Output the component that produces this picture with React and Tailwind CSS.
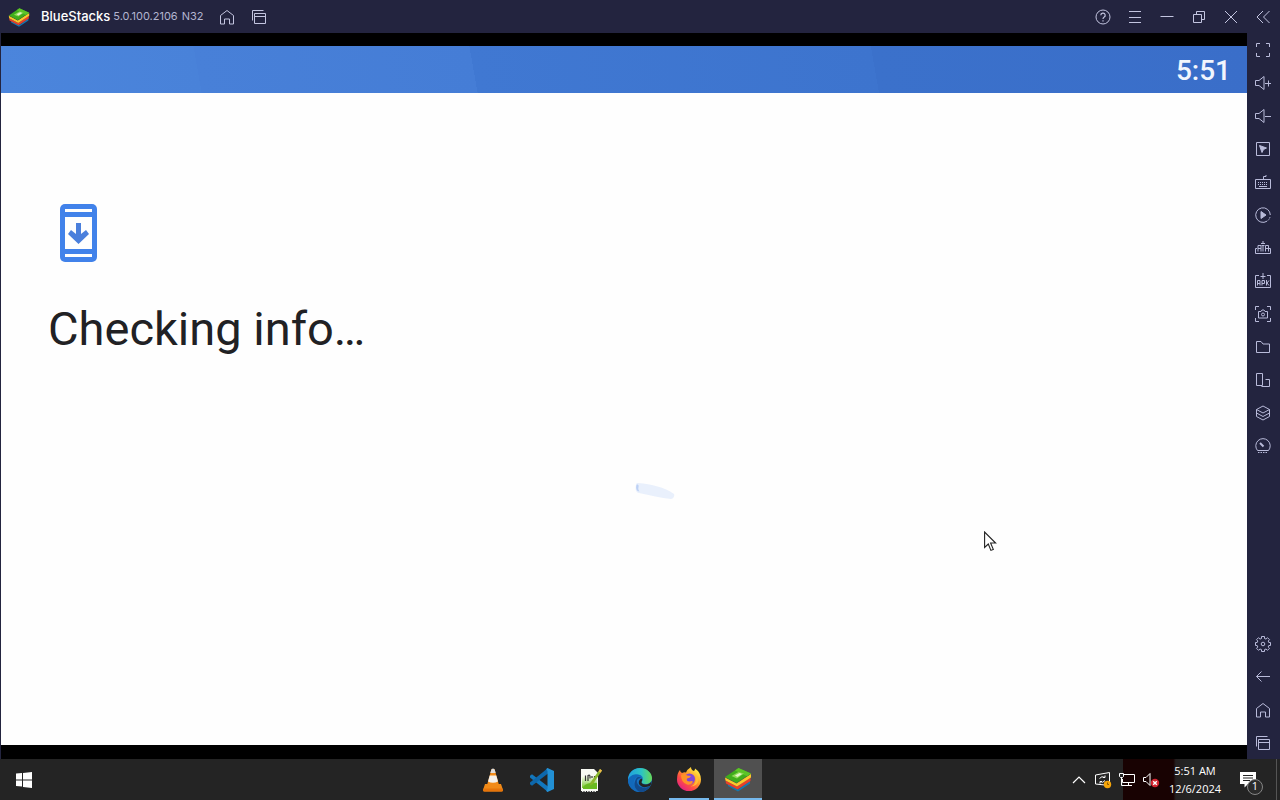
import { useId } from 'react';

const LineIcon = ({ children, size = 18 }) => (
    <svg width={size} height={size} viewBox="0 0 18 18" fill="none" stroke="currentColor" strokeWidth="1" aria-hidden="true">
        {children}
    </svg>
);

const HomeIcon = () => (
    <LineIcon>
        <path d="M2.500 7.500 9 2.500l6.500 5v8.500h-4v-5h-5v5h-4z" />
    </LineIcon>
);

const WindowsIcon = () => (
    <LineIcon>
        <path d="M4.500 5.500h11v10h-11zM4.500 8.500h11M2.500 12.500v-10h11" />
    </LineIcon>
);

const BlueStacksLogo = ({ size }) => (
    <svg width={size} height={size} viewBox="0 0 28 28" aria-hidden="true">
        <path d="M4 19 14 24.500 26 16v2.500L14 26.500 4 21z" fill="#1478b0" />
        <path d="M1.500 15.500 13 21.500 26.500 12.500V16L13.500 24.500 2 18.500z" fill="#e8402a" />
        <path d="M1 12.500 12.500 18.500 27 9v3.500L13 21.500 1.500 15.500z" fill="#fbc82c" />
        <path d="M1 12 14.500 3 27 8.500 12.500 18z" fill="#3fae1c" />
        <path d="M14.500 3 27 8.500l-4 2.800L11 5.400z" fill="#5cc427" />
        <path d="M7.500 11 14.500 7l5.500 1.500-7 5z" fill="#8fd957" />
        <path d="m11 10.500 4.500-2.500 2.500 1-4.500 3z" fill="#e3f4c9" />
    </svg>
);

const sideTools = [
    { label: 'Full screen', icon: <path d="M2.500 6V2.500H6M12 2.500h3.500V6M15.500 12v3.500H12M6 15.500H2.500V12" /> },
    { label: 'Increase volume', icon: <path d="M1.500 6.500h3.500l5-4v13l-5-4H1.500zM11 9.500h6M14.500 6.500v6" /> },
    { label: 'Decrease volume', icon: <path d="M1.500 6.500h3.500l5-4v13l-5-4H1.500zM11 9.500h6" /> },
    {
        label: 'Lock cursor',
        icon: (
            <>
                <path d="M2.500 2.500h13v13h-13z" />
                <path d="M5.500 5.500l7 2.500-3 1.500-1.500 3z" fill="currentColor" />
            </>
        ),
    },
    {
        label: 'Game controls',
        icon: (
            <>
                <path d="M1.500 6.500h15v9h-15zM9.500 6V3.500H12V2" />
                <path d="M4 9.500h10M4 11.500h10" strokeDasharray="1 1" />
                <path d="M5 13.500h8" />
            </>
        ),
    },
    {
        label: 'Macro recorder',
        icon: (
            <>
                <path d="M13 15.200A7.300 7.300 0 1 1 16.300 9" />
                <path d="M16 11a7 7 0 0 1-3 4.200" strokeDasharray="1.500 1" />
                <path d="M7 5.500 12 9l-5 3.500z" fill="currentColor" />
            </>
        ),
    },
    { label: 'Multi-instance manager', icon: <path d="M3 9.500H1.500v5h15v-5H15M4 12.500V6.500h3v6M9 2v3M7 4.500h4M7.500 6.500h3M9 6.500v6M11.500 12.500V6.500h3v6M4 9.500h3M11.500 9.500h3" /> },
    { label: 'Install APK', icon: <path d="M5 3.500H1.500v12h15v-12H13M9 1v6M6.500 4.500h5M3.500 13.500v-5H6v5M3.500 11.500H6M8 13.500v-5h2.500v3H8M12.500 8v5.500M15 8.500l-2 2.500 2 2.500" /> },
    {
        label: 'Screenshot',
        icon: (
            <>
                <path d="M1.500 5V1.500H5M13 1.500h3.500V5M16.500 13v3.500H13M5 16.500H1.500V13" />
                <path d="M4.500 6.500H7l1-1.500h2l1 1.500h2.500v6.500h-9z" />
                <circle cx="9" cy="9.500" r="1.500" />
            </>
        ),
    },
    { label: 'Media folder', icon: <path d="M2.500 14.500v-11H7l2 2.500h6.500v8.500z" /> },
    { label: 'Rotate', icon: <path d="M2.500 2.500h6v12h-6zM11.500 8.500h4v7h-8" /> },
    { label: 'Eco mode', icon: <path d="m9 2 6.500 3.500L9 9 2.500 5.500zM2.500 5.500V9L9 12.500 15.500 9V5.500M2.500 9v3.500L9 16l6.500-3.500V9" /> },
    {
        label: 'Performance',
        icon: (
            <>
                <path d="M3.500 13.500a7.200 7.200 0 1 1 11 0z" />
                <path d="m6 6 3.500 3.500" strokeWidth="2" />
                <path d="M4 15.500h10" strokeDasharray="1.500 1" />
            </>
        ),
    },
];

const navTools = [
    {
        label: 'Settings',
        icon: (
            <LineIcon>
                <path d="M7.500 1.500h3v2l1.500.6L13.500 2.700l2 2L14.200 6l.6 1.500h1.700v3h-1.700l-.6 1.500 1.300 1.300-2 2-1.500-1.300-1.500.6v1.900h-3v-1.900L6 14l-1.500 1.300-2-2L3.800 12l-.6-1.500H1.500v-3h1.700L3.800 6 2.500 4.700l2-2L6 4.100l1.500-.6z" />
                <circle cx="9" cy="9" r="1.800" />
            </LineIcon>
        ),
    },
    { label: 'Back', icon: <LineIcon><path d="M16 8.500H2.500M7.500 3.500l-5 5 5 5" /></LineIcon> },
    { label: 'Home', icon: <HomeIcon /> },
    { label: 'Recent apps', icon: <WindowsIcon /> },
];

const SideButton = ({ label, children }) => (
    <button type="button" aria-label={label} className="flex h-[33px] w-full shrink-0 items-center justify-center">
        {children}
    </button>
);

const TitleBar = () => (
    <header className="flex h-[33px] shrink-0 items-center bg-[#23243f] text-[#c3c5e0]">
        <div className="flex items-center pl-2">
            <BlueStacksLogo size={22} />
            <h1 className="ml-[11px] font-[Inter,sans-serif] text-[13px] font-medium text-white">BlueStacks</h1>
            <span className="ml-[3px] font-[Inter,sans-serif] text-[11px] text-[#b3b5d0]">5.0.100.2106</span>
            <span className="ml-1 font-[Inter,sans-serif] text-[11px] text-[#b3b5d0]">N32</span>
        </div>
        <nav className="ml-2 flex">
            <button type="button" aria-label="Home" className="flex w-8 justify-center"><HomeIcon /></button>
            <button type="button" aria-label="Recent apps" className="flex w-8 justify-center"><WindowsIcon /></button>
        </nav>
        <div className="ml-auto flex pr-px">
            <button type="button" aria-label="Help" className="flex w-8 justify-center">
                <LineIcon>
                    <circle cx="9" cy="9" r="7" />
                    <path d="M6.800 7.300a2.200 2.200 0 1 1 3.200 2c-.8.4-1 .7-1 1.700M9 12.200v1.300" strokeWidth="1.200" />
                </LineIcon>
            </button>
            <button type="button" aria-label="Menu" className="flex w-8 justify-center">
                <LineIcon><path d="M3 3.500h12M3 9.500h12M3 14.500h12" /></LineIcon>
            </button>
            <button type="button" aria-label="Minimize" className="flex w-8 justify-center">
                <LineIcon><path d="M2.500 8.500h13" /></LineIcon>
            </button>
            <button type="button" aria-label="Restore" className="flex w-8 justify-center">
                <LineIcon><path d="M3.500 6.500h8v8h-8zM6.500 6V3.500h8v8H12" /></LineIcon>
            </button>
            <button type="button" aria-label="Close" className="flex w-8 justify-center">
                <LineIcon><path d="m3 3 12 12M15 3 3 15" /></LineIcon>
            </button>
            <button type="button" aria-label="Collapse sidebar" className="flex w-8 justify-center">
                <LineIcon><path d="M9 3 3 9l6 6M15.500 3l-6 6 6 6" /></LineIcon>
            </button>
        </div>
    </header>
);

const DeviceScreen = () => (
    <main className="flex min-w-0 flex-1 flex-col border-l border-[#23243f] bg-black pt-[13px] pb-[14px] font-[Roboto,sans-serif]">
        <div className="flex h-[47px] shrink-0 items-center justify-end bg-[linear-gradient(80deg,#4b85dc_0%,#4982d9_16%,#4880d8_16%,#457dd6_38%,#4078d2_38%,#3d74ce_70%,#3b71cb_70%,#3a6ec9_100%)] pt-0.5 pr-4">
            <time className="text-[28px] font-medium text-[#f1f5fd]">5:51</time>
        </div>
        <section className="relative flex-1 bg-[#fefefe] px-[47px] pt-[108px]">
            <svg width="62" height="62" viewBox="0 0 62 62" aria-hidden="true">
                <rect x="12" y="3" width="37" height="58" rx="5" fill="#4182ea" />
                <path d="M17 8h27v3H17zM17 16h27v32H17zM17 53h27v3H17z" fill="#fefefe" />
                <path d="M28 22h5v11l5-4 3 4-10.500 10L20 33l3-4 5 4z" fill="#4a7fdc" />
            </svg>
            <h2 className="mt-[34px] text-[47px] leading-[64px] text-[#212124]">Checking info…</h2>
            <div role="status" aria-label="Loading" className="absolute inset-x-0 top-[388px] flex justify-center pl-[62px]">
                <svg width="44" height="24" viewBox="0 0 44 24" aria-hidden="true">
                    <path d="M3 3.500c0-1 1-1.500 2-1.500 14 1.500 26 4 36 11 1 2-1 5-3 5-10-1-21-4-32-6-3-.5-4-3-3-8.500z" fill="#e9f0fc" />
                    <path d="M3.500 4C5 3 6 4 5.500 6s0 3 1 4.500c-3 0-4-3-3-6.500z" fill="#bdd1f5" />
                </svg>
            </div>
        </section>
    </main>
);

const MousePointer = () => (
    <svg className="absolute top-[531px] left-[984px]" width="13" height="21" viewBox="0 0 13 21" aria-hidden="true">
        <path d="M.6 1v15.500L4.300 13l2.600 6.400 2.400-1L6.600 12h5z" fill="#fff" stroke="#222" strokeWidth="1.100" />
    </svg>
);

const VlcIcon = () => (
    <svg width="24" height="26" viewBox="0 0 24 26" aria-hidden="true">
        <path d="M4 17h16l2 6q0 1.500-1.500 1.500h-17Q2 24.500 2 23z" fill="#f08a18" />
        <path d="M2.500 21.500h19l.5 2q-.3 1-1.300 1H3.300q-1 0-1.300-1z" fill="#e6740a" />
        <path d="M10.500 2h3l4.500 16q-6 3.500-12 0z" fill="#f28b19" />
        <path d="M10.200 3q.2-1.500 1.800-1.500T13.800 3l.9 3H9.300z" fill="#ddd" />
        <path d="M8.700 8.500h6.600l1.700 6q-5 2.500-10 0z" fill="#f4f1ec" />
    </svg>
);

const VsCodeIcon = () => (
    <svg width="26" height="26" viewBox="0 0 26 26" aria-hidden="true">
        <path d="M1 8.800 3 7.200l16 12.300V25L1 10.500z" fill="#1277bd" />
        <path d="M1 17.200 3 18.800 19 6.500V1L1 15.500z" fill="#0d67ab" />
        <path d="m18.500 1 6.500 3v18l-6.500 3q-1.500-.5-1-2l1-.8V3.800l-1-.8q-.5-1.500 1-2z" fill="#2290d4" />
    </svg>
);

const NotepadIcon = () => {
    const id = useId();
    return (
        <svg width="24" height="26" viewBox="0 0 24 26" aria-hidden="true">
            <defs>
                <linearGradient id={id} x1="0" y1="0" x2="0" y2="1">
                    <stop offset="0" stopColor="#fbfff2" />
                    <stop offset="1" stopColor="#76c52d" />
                </linearGradient>
            </defs>
            <path d="M2 2h13l4 4v18H2z" fill="#f8faf3" />
            <path d="M3 9h15v12H3z" fill={`url(#${id})`} />
            <path d="M4 20q4-5 14-4v6H4z" fill="#69bb21" />
            <path d="M6.500 14V8.500M9 14V8.500q2-1 2 1v2M13 9v2M15.500 9v2" stroke="#333" strokeWidth="1.200" fill="none" />
            <path d="m21 2 2 1.500L14 17l-3 1.500.5-3z" fill="#8ab82b" />
            <path d="m21 2 2 1.500-1.500 2.300-2-1.400z" fill="#efb849" />
            <path d="M3 24.500h15" stroke="#ddd" strokeDasharray="1.500 1" />
        </svg>
    );
};

const EdgeIcon = () => {
    const id = useId();
    return (
        <svg width="26" height="26" viewBox="0 0 26 26" aria-hidden="true">
            <defs>
                <linearGradient id={id} x1="0" y1="0" x2="1" y2="0">
                    <stop offset="0" stopColor="#209fe0" />
                    <stop offset=".55" stopColor="#2bc3c5" />
                    <stop offset="1" stopColor="#67d957" />
                </linearGradient>
            </defs>
            <circle cx="13" cy="13" r="12" fill="#1673c5" />
            <path d="M1 13C1 6 6 1 13 1s12 5 12 10c0 4-3 6-6.500 6-3 0-4-1-4-2 0-.8 1.300-1.500 1.300-3.500 0-2.500-2.500-4-5.800-4C5 7.500 2 10 1 13z" fill={`url(#${id})`} />
            <path d="M9 10.500C5 14 6 21.500 13 25 6 25 1 19 1 13c1.500-4 5-6 9-5.500q3 .3 4.500 2Q11.500 8.500 9 10.500z" fill="#1269bb" />
            <path d="M10 13c-1 5 4 8.500 9 7.500q2-.3 4-1.500c-2 4-6 6-10 6C6 22 6.500 15 10 10.500q2-1 4.500.5-3-.5-4.500 2z" fill="#124b8d" />
            <path d="M14.500 15c0 1.500 1.500 2.500 4 2.500 3 0 5-1.500 6-3.500q.3 3-1.500 5-8 3-11-2-1-4 2.500-5.500 1.500 1 0 3.500z" fill="#242424" />
        </svg>
    );
};

const FirefoxIcon = () => {
    const id = useId();
    return (
        <svg width="26" height="26" viewBox="0 0 26 26" aria-hidden="true">
            <defs>
                <linearGradient id={id} x1=".85" y1=".1" x2=".2" y2=".9">
                    <stop offset="0" stopColor="#fff044" />
                    <stop offset=".4" stopColor="#ff9a28" />
                    <stop offset=".7" stopColor="#ff4d45" />
                    <stop offset="1" stopColor="#e5267c" />
                </linearGradient>
            </defs>
            <path d="M4 4q0 2 2 3 2-1 4-.5 1-3 5-5.500 0 3 3 4 1-1 1-2.500 6 4 6 11A12 11.500 0 0 1 1 13.500Q1 7 4 4z" fill={`url(#${id})`} />
            <circle cx="13.500" cy="13" r="5.500" fill="#8046d8" />
            <path d="M5 9q4-2 6 .5 2 0 4 .5-1 2-4 2.500-1 3 2.500 3 2-1 3.500 0-1.500 4-6 3-6-2-6-9.500z" fill="#ff9227" />
            <path d="M18 8q3 3 1.500 7.500-1 4-5 5 7-.5 8-6.500 0-4-4.500-6z" fill="#ffbd35" />
        </svg>
    );
};

const apps = [
    { label: 'VLC media player', icon: <VlcIcon />, state: '' },
    { label: 'Visual Studio Code', icon: <VsCodeIcon />, state: '' },
    { label: 'Notepad++', icon: <NotepadIcon />, state: '' },
    { label: 'Microsoft Edge', icon: <EdgeIcon />, state: '' },
    { label: 'Firefox', icon: <FirefoxIcon />, state: 'open' },
    { label: 'BlueStacks', icon: <BlueStacksLogo size={28} />, state: 'active' },
];

const Taskbar = () => (
    <footer className="flex h-[41px] shrink-0 bg-[#242424] text-white">
        <button type="button" aria-label="Start" className="flex w-12 items-center justify-center">
            <svg width="16" height="16" viewBox="0 0 16 16" fill="#fff" aria-hidden="true">
                <path d="M0 1.500 6 1v6.500H0zM7 1 16 0v7.500H7zM0 8.500h6v6L0 14zM7 8.500h9V16l-9-1z" />
            </svg>
        </button>
        <nav className="flex flex-1 justify-center pl-[116px]">
            {apps.map((app) => (
                <button
                    key={app.label}
                    type="button"
                    aria-label={app.label}
                    className={`flex w-12 flex-col items-center ${app.state === 'active' ? 'bg-[#505050]' : 'mr-px'}`}
                >
                    <span className="flex flex-1 items-center">{app.icon}</span>
                    {app.state === 'open' && <span className="h-[2px] w-10 bg-[#76b9ed]" />}
                    {app.state === 'active' && <span className="h-[2px] w-full bg-[#76b9ed]" />}
                </button>
            ))}
        </nav>
        <div className="flex items-center">
            <button type="button" aria-label="Show hidden icons" className="flex w-6 justify-center">
                <svg width="14" height="14" viewBox="0 0 14 14" fill="none" stroke="#fff" strokeWidth="1.200"><path d="m1 10 6-6 6 6" /></svg>
            </button>
            <button type="button" aria-label="Updates" className="flex w-6 justify-center">
                <svg width="18" height="18" viewBox="0 0 18 18" fill="none" stroke="#fff" aria-hidden="true">
                    <path d="M1.500 4 15.500 1.500v13L1.500 13z" />
                    <path d="M5.500 7.500q2-3 5.500-1V4.500M11 9.500q-2 3-5 1v2M11 6.500H9M6 10.500h2" />
                    <circle cx="13.500" cy="13.500" r="3.700" fill="#f5a50a" stroke="none" />
                    <path d="M13.500 11.500v2h1.500" stroke="#8d5900" />
                </svg>
            </button>
            <div className="flex h-full items-center bg-[linear-gradient(90deg,#242424_8px,#180202_8px)]">
                <button type="button" aria-label="Network" className="flex w-6 justify-center">
                    <svg width="18" height="18" viewBox="0 0 18 18" fill="none" stroke="#fff" aria-hidden="true">
                        <path d="M6 3.500h10.500v8H4.500V8M10.500 11.500v3M7 14.500h7M1.500 2.500h4v3l-1 1h-2l-1-1zM3.500 7v7.500H7" />
                    </svg>
                </button>
                <button type="button" aria-label="Volume muted" className="flex w-6 justify-center">
                    <svg width="18" height="18" viewBox="0 0 18 18" fill="none" stroke="#fff" aria-hidden="true">
                        <path d="M1.500 6.500H4l4-4v12l-4-4H1.500z" />
                        <circle cx="13" cy="12" r="4.200" fill="#d3242f" stroke="none" />
                        <path d="m11.200 10.200 3.600 3.600M14.800 10.200l-3.600 3.600" strokeWidth="1.400" />
                    </svg>
                </button>
            </div>
            <time className="flex h-full w-16 flex-col items-center justify-center bg-[linear-gradient(90deg,#180202_0%,#180202_16%,#242020_20%,#242424_40%)] font-['Open_Sans',sans-serif] text-[11px] leading-[18px] whitespace-nowrap">
                <span>5:51 AM</span>
                <span>12/6/2024</span>
            </time>
            <button type="button" aria-label="Notifications" className="relative flex w-[49px] justify-center pr-2">
                <svg width="18" height="18" viewBox="0 0 18 18" aria-hidden="true">
                    <path d="M1 1h16v12H9l-3.500 3.500V13H1z" fill="#fff" />
                    <path d="M4 4.500h10M4 7h10M4 9.500h7" stroke="#242424" />
                </svg>
                <span className="absolute top-2 left-5 flex size-4 items-center justify-center rounded-full border border-[#858585] bg-[#2b2b2b] font-['Open_Sans',sans-serif] text-[11px]">1</span>
            </button>
            <span className="h-full w-1 border-l border-[#555]" />
        </div>
    </footer>
);

const App = () => (
    <div className="relative flex h-screen flex-col overflow-hidden bg-black">
        <TitleBar />
        <div className="flex min-h-0 flex-1">
            <DeviceScreen />
            <aside className="flex w-[33px] shrink-0 flex-col bg-[#23243f] pr-px text-[#b9bbda]">
                {sideTools.map((tool) => (
                    <SideButton key={tool.label} label={tool.label}>
                        <LineIcon>{tool.icon}</LineIcon>
                    </SideButton>
                ))}
                <div className="mt-auto">
                    {navTools.map((tool) => (
                        <SideButton key={tool.label} label={tool.label}>{tool.icon}</SideButton>
                    ))}
                </div>
            </aside>
        </div>
        <Taskbar />
        <MousePointer />
    </div>
);

export default App;
